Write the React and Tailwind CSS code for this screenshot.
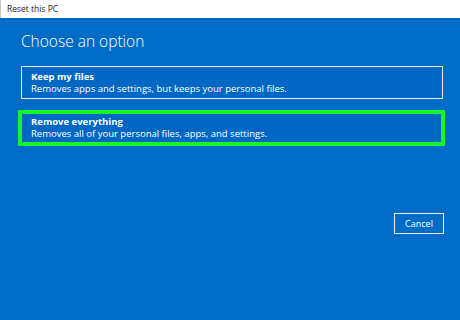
import React from 'react';

function OptionCard({ title, description, highlighted }) {
  return (
    <div
      className={
        highlighted
          ? '-ml-[3px] -mr-[2px] h-[36px] border-[4px] border-[#17f52a] bg-[#0068c4] px-[9px] flex flex-col justify-center'
          : 'h-[33px] border-[1.5px] border-[#e6eef8] bg-[#0068c4] px-[9px] flex flex-col justify-center'
      }
    >
      <p className="text-[9.5px] leading-[12px] font-bold text-white">{title}</p>
      <p className="text-[9.5px] leading-[12px] text-white">{description}</p>
    </div>
  );
}

export default function App() {
  return (
    <div
      className="w-[460px] h-[320px] flex flex-col bg-[#016cc6] overflow-hidden"
      style={{ fontFamily: '"Open Sans", "Noto Sans", sans-serif' }}
    >
      {/* Title bar */}
      <div className="h-[18px] bg-white border-l border-[#c8c8c8] flex items-center px-[6px]">
        <span className="text-[8.5px] text-[#1a1a1a]">Reset this PC</span>
      </div>

      {/* Content */}
      <div className="flex-1 flex flex-col pl-[21px] pr-[17px]">
        <h1 className="mt-[13px] text-[15.5px] leading-[20px] font-light text-white">Choose an option</h1>

        <div className="mt-[15px]">
          <OptionCard title="Keep my files" description="Removes apps and settings, but keeps your personal files." />
        </div>
        <div className="mt-[11px]">
          <OptionCard
            highlighted
            title="Remove everything"
            description="Removes all of your personal files, apps, and settings."
          />
        </div>

        <div className="mt-[67px] flex justify-end -mr-[1px]">
          <button className="w-[50px] h-[21px] border-[1.5px] border-[#e6eef8] text-[9px] text-white flex items-center justify-center">
            Cancel
          </button>
        </div>
      </div>
    </div>
  );
}
